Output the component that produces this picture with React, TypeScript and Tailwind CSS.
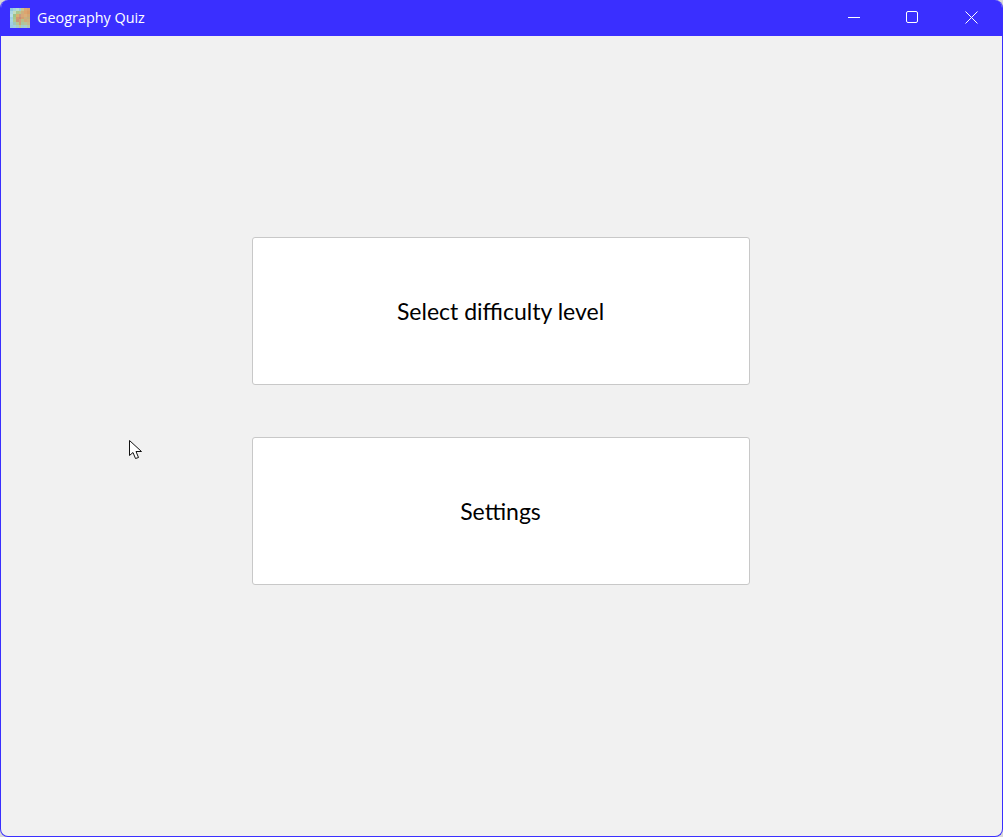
const mapCells = [
  "#8fc7e0", "#a6d3dc", "#b9dbd0", "#9fcbd8", "#c9c58f", "#d8a878", "#d9a070",
  "#a9d6e6", "#c4dcc0", "#a8c98f", "#b9c68c", "#cfae7c", "#dca46f", "#d89c68",
  "#b8dde8", "#9cc48c", "#d8b070", "#c89c80", "#d8a878", "#dcae78", "#d0a874",
  "#9fd0e4", "#a8c88c", "#d09a70", "#c88c78", "#d4a070", "#c8b080", "#c4ae7c",
  "#a6d4e8", "#b0cc90", "#c89878", "#d49c80", "#b8c088", "#d4a878", "#ccb080",
  "#a0cfe6", "#9cc8c0", "#b8c890", "#d0a078", "#a8c8a0", "#b8c498", "#c8b88c",
  "#9ccbe4", "#a4d0dc", "#a8ccc4", "#c0c898", "#a4cccc", "#a8ccd0", "#b4c8b0",
];

function MapIcon() {
  return (
    <svg width="20" height="20" viewBox="0 0 7 7" shapeRendering="crispEdges">
      {mapCells.map((c, i) => (
        <rect key={i} x={i % 7} y={Math.floor(i / 7)} width="1.02" height="1.02" fill={c} />
      ))}
    </svg>
  );
}

function MenuButton({ label }: { label: string }) {
  return (
    <button className="flex h-[148px] w-[498px] items-center justify-center rounded-[3px] border border-[#c8c8c8] bg-white pr-[1px] font-['Lato','Open_Sans',sans-serif] text-[23px] text-black">
      {label}
    </button>
  );
}

export default function App() {
  return (
    <div className="h-[837px] w-[1003px] overflow-hidden bg-[#d8d8d8]">
      <div className="relative flex h-full flex-col overflow-hidden rounded-[8px] border border-t-0 border-[#3a2fff] bg-[#f1f1f1]">
        <div className="flex h-9 shrink-0 items-center bg-[#3a2fff] text-white">
          <div className="ml-[9px] mr-[7px]">
            <MapIcon />
          </div>
          <span className="font-['Open_Sans','Noto_Sans',sans-serif] text-[14.4px]">Geography Quiz</span>
          <div className="ml-auto flex h-full items-center pr-[1px]">
            <button className="flex h-full w-[58px] items-center justify-center pb-[2px]">
              <svg width="12" height="12" viewBox="0 0 12 12" stroke="white" fill="none">
                <path d="M0 6.5H12" />
              </svg>
            </button>
            <button className="flex h-full w-[58px] items-center justify-center pb-[2px]">
              <svg width="12" height="12" viewBox="0 0 12 12" stroke="white" fill="none">
                <rect x="0.5" y="0.5" width="11" height="11" rx="1.5" />
              </svg>
            </button>
            <button className="flex h-full w-[60px] items-center justify-center pb-[2px]">
              <svg width="13" height="13" viewBox="0 0 13 13" stroke="white" fill="none">
                <path d="M0.5 0.5L12.5 12.5M12.5 0.5L0.5 12.5" />
              </svg>
            </button>
          </div>
        </div>
        <div className="flex flex-1 flex-col items-center gap-[52px] pt-[201px] pr-[1px]">
          <MenuButton label="Select difficulty level" />
          <MenuButton label="Settings" />
        </div>
        <svg
          className="absolute left-[128px] top-[440px]"
          width="14"
          height="20"
          viewBox="0 0 14 20"
        >
          <path
            d="M0.5 0.5V15.5L4 12.5L6.5 18.5L9.5 17.5L7 11.5H12.5Z"
            fill="white"
            stroke="#111"
            strokeWidth="1"
          />
        </svg>
      </div>
    </div>
  );
}
